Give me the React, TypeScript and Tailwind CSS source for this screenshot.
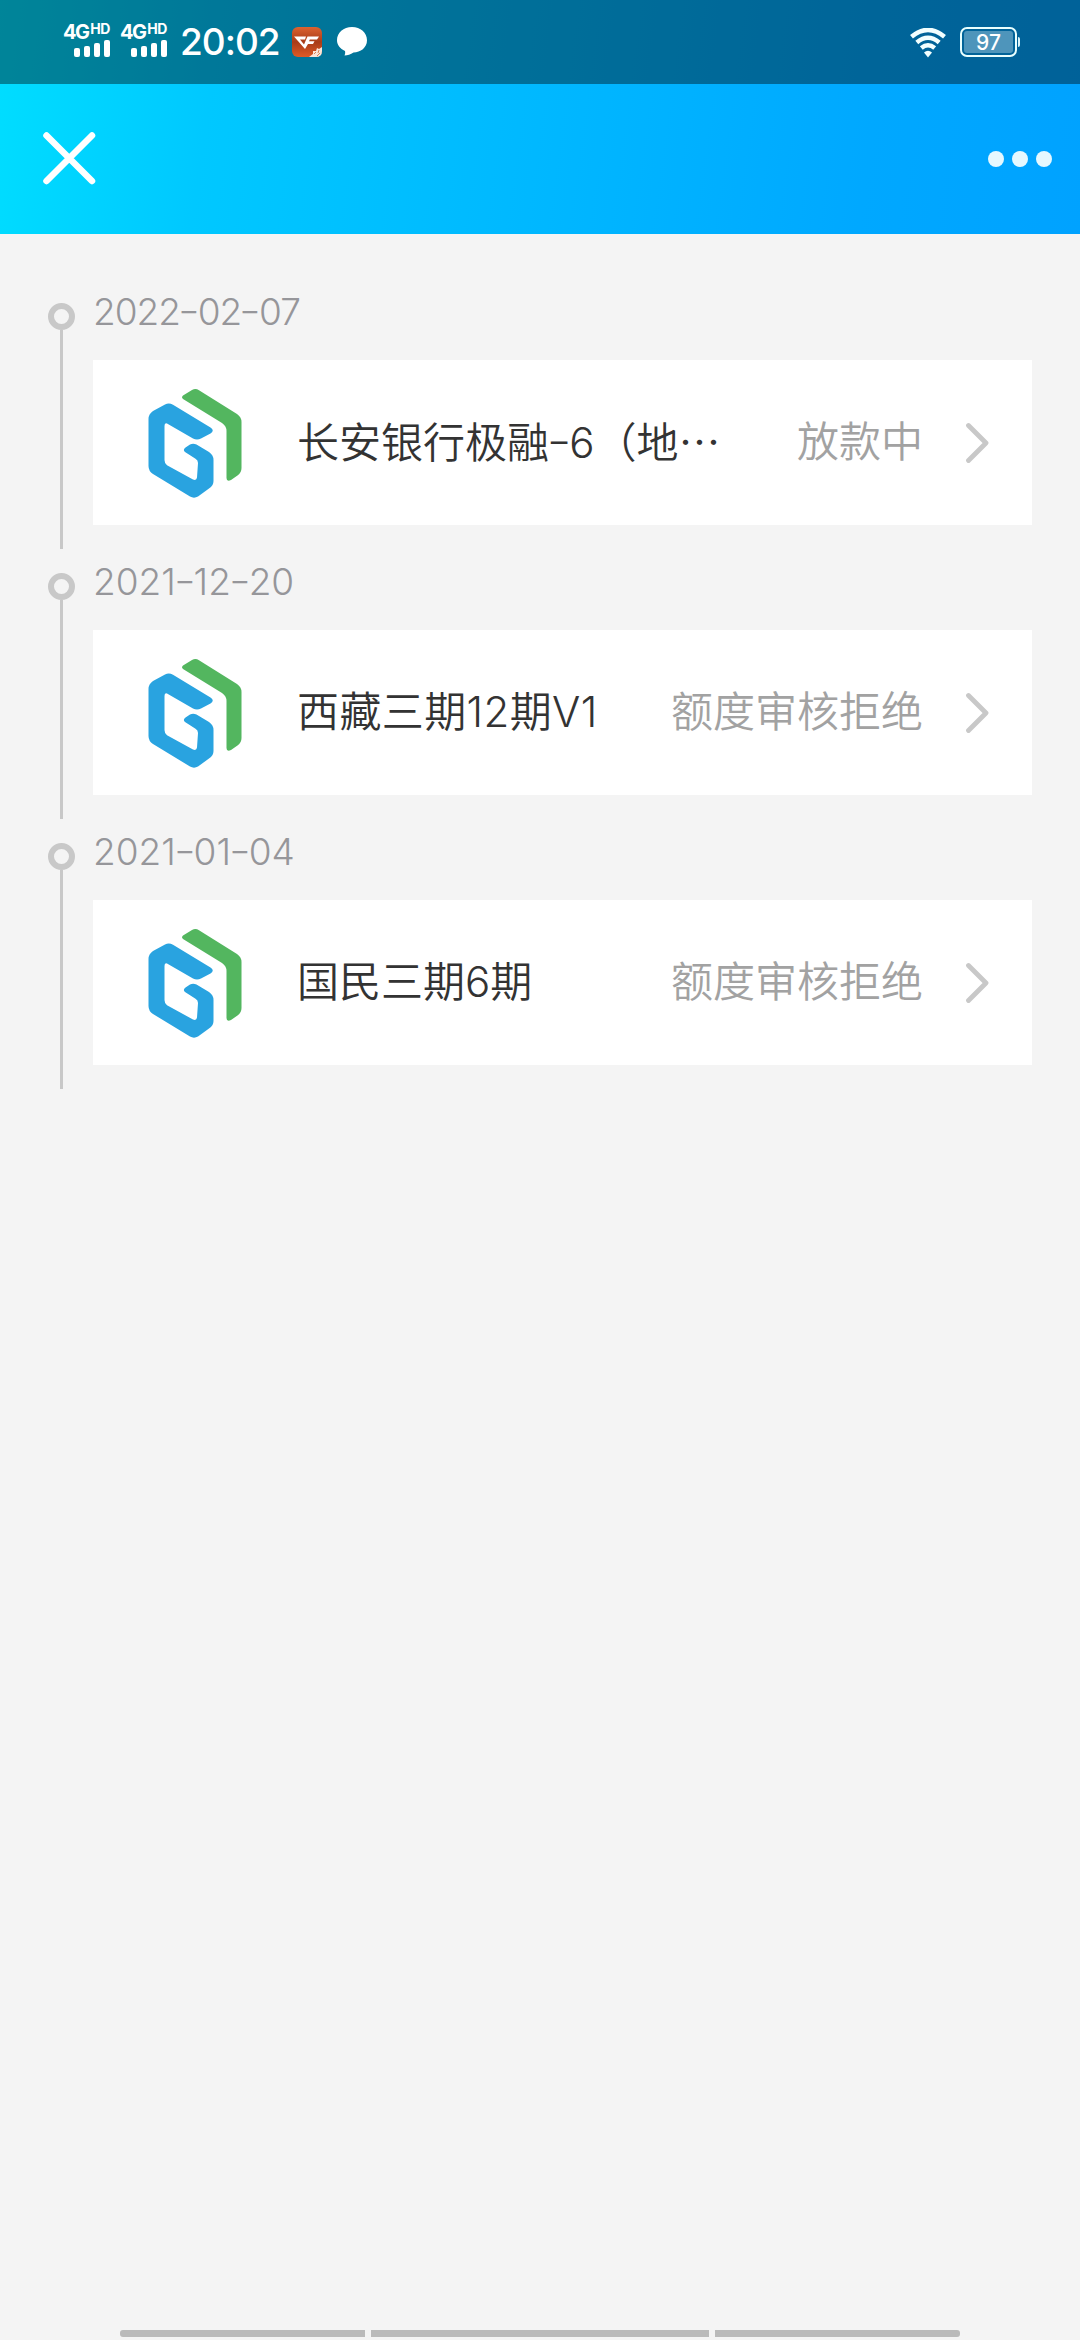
const records = [
  { date: '2022-02-07', spacing: 'tracking-[-1px]', titleSpacing: 'tracking-normal', title: '长安银行极融-6（地', more: true, status: '放款中' },
  { date: '2021-12-20', spacing: 'tracking-[0px]', titleSpacing: 'tracking-[0.4px]', title: '西藏三期12期V1', more: false, status: '额度审核拒绝' },
  { date: '2021-01-04', spacing: 'tracking-[0px]', titleSpacing: 'tracking-normal', title: '国民三期6期', more: false, status: '额度审核拒绝' },
];

function Signal() {
  return (
    <div className="flex h-[33px] w-[47px] flex-col items-end">
      <div className="flex h-[16px] w-full items-start font-bold text-white">
        <span className="text-[20px] leading-[16px] tracking-[-1.6px]">4G</span>
        <span className="ml-[2px] text-[14px] leading-[10px] tracking-[-0.5px]">HD</span>
      </div>
      <div className="flex h-[17px] items-end gap-[4px]">
        <i className="h-[9px] w-[6px] rounded-[2px] bg-white" />
        <i className="h-[11px] w-[6px] rounded-[2px] bg-white" />
        <i className="h-[14px] w-[6px] rounded-[2px] bg-white" />
        <i className="h-[17px] w-[6px] rounded-[2px] bg-white" />
      </div>
    </div>
  );
}

function GameIcon() {
  return (
    <svg className="ml-[14px] mt-[27px] h-[30px] w-[30px]" viewBox="0 0 30 30">
      <defs>
        <linearGradient id="game" x1="0" y1="0" x2="0" y2="1">
          <stop offset="0" stopColor="#dc6230" />
          <stop offset="0.5" stopColor="#a83c18" />
          <stop offset="1" stopColor="#dd5a26" />
        </linearGradient>
      </defs>
      <rect width="30" height="30" rx="6" fill="url(#game)" />
      <path d="M2 9.500H14L13 12.500H8L12 17.500L15.500 9.500H27L25 12.500H17.800L17 14.200H22.500L21 17H16L13 22Z" fill="#fff" />
      <path d="M30 20v4q0 6-6 6h-7l4-3 0-3 3 0 1-3 2 1z" fill="#fbe5d8" />
      <path d="M22 27l2-2M26 26l1-3M25 29l3-3" stroke="#d8814f" strokeWidth="1" />
    </svg>
  );
}

function StatusBar() {
  return (
    <div className="flex h-[84px] items-start bg-black/40 text-white">
      <div className="ml-[63px] mt-[24px] flex gap-[10px]">
        <Signal />
        <Signal />
      </div>
      <span className="ml-[13px] mt-[20px] w-[98px] text-[37px] leading-[44px] font-medium tracking-[-1px] whitespace-nowrap">20:02</span>
      <GameIcon />
      <svg className="ml-[15px] mt-[27px] h-[30px] w-[30px]" viewBox="0 0 30 30" fill="#fff">
        <path d="M15 0C23.500 0 30 5.800 30 13.300 30 20.700 23.500 25.500 16.500 25.500 13.500 27.500 10.500 28.500 7.500 28.500 8.300 26.700 8.300 25.500 8 24 3 21.500 0 18 0 13.300 0 5.800 6.500 0 15 0Z" />
      </svg>
      <svg className="ml-auto mt-[28px] h-[30px] w-[36px]" viewBox="0 0 36 30" fill="none" stroke="#f2ffff" strokeWidth="4.500">
        <path d="M1.500 8.800Q18-5 34.500 8.800" />
        <path d="M6.800 14.500Q18 5 29.200 14.500" />
        <path d="M11.300 20Q18 14.500 24.700 20" />
        <path d="M14 24.500Q18 21 22 24.500L18 29.500Z" fill="#f2ffff" stroke="none" />
      </svg>
      <div className="mr-[60px] ml-[14px] mt-[27px] flex items-center">
        <div className="flex h-[30px] w-[57px] rounded-[7px] border-[2px] border-[#e8ffff] p-[2px]">
          <div className="flex-1 rounded-[3px] bg-[#4e95bb] text-center text-[21px] leading-[23px] font-medium">97</div>
        </div>
        <div className="ml-[1px] h-[10px] w-[2px] rounded-r-[2px] bg-[#d8f4fa]" />
      </div>
    </div>
  );
}

function TitleBar() {
  return (
    <div className="flex h-[150px] items-center justify-between pr-[28px] pb-[1px] pl-[43px]">
      <svg className="h-[53px] w-[53px]" viewBox="0 0 53 53" stroke="#fff" strokeWidth="6.500" strokeLinecap="round">
        <path d="M3.500 3.500L49 49M49 3.500L3.500 49" />
      </svg>
      <div className="flex gap-[8px]">
        <i className="h-[16px] w-[16px] rounded-full bg-[#e6f8ff]" />
        <i className="h-[16px] w-[16px] rounded-full bg-[#e6f8ff]" />
        <i className="h-[16px] w-[16px] rounded-full bg-[#e6f8ff]" />
      </div>
    </div>
  );
}

function Logo() {
  return (
    <svg className="mt-[2px] ml-[55px] h-[109px] w-[94px] shrink-0" viewBox="0 0 94 109">
      <path
        d="M35 6.500L44 1Q47.500-1 51 1.200L89 25Q93.500 28 93.500 33V79Q93.500 84 89.500 86.500L83 91Q78.500 93 78.500 89V42Q78.500 37 74 34L35 10Q33 8.300 35 6.500Z"
        fill="#53b65f"
      />
      <path
        d="M5 22L17 15.500Q21 13.500 25 15.800L62.500 38.500Q67 41.500 62.500 44.500L53 49.500Q49 51.500 45 49.500L19 34.500Q16.500 33.500 16.500 37V71Q16.500 74.500 19 76.200L45 90.500Q48.500 92 49 88.500L50 74Q50 71 47.500 69.700L37 63Q34.500 61 37.500 58.500L42 55.500Q45 53.800 48.500 55.500L61 63Q65.500 66 65.500 71V92Q65.500 97 61 99.500L50 107.500Q46 109.800 42 107.500L5 85Q0.500 82 0.500 77V30Q0.500 25 5 22Z"
        fill="#29a3e0"
      />
    </svg>
  );
}

/* Text whose hyphens are widened and raised to the middle of the digits. */
function Dashed({ text }: { text: string }) {
  return (
    <>
      {text.split(/(-)/).map((part, i) =>
        part === '-' ? (
          <span key={i} className="inline-block w-[0.48em] origin-center -translate-y-[0.04em] scale-x-[1.3] text-center tracking-normal">
            -
          </span>
        ) : (
          <span key={i}>{part}</span>
        ),
      )}
    </>
  );
}

function Record({ date, spacing, titleSpacing, title, more, status }: (typeof records)[number]) {
  return (
    <div className="flex h-[270px]">
      <div className="mr-[18px] ml-[48px] flex w-[27px] flex-col items-center pt-[24px]">
        <div className="h-[27px] w-[27px] shrink-0 rounded-full border-[6px] border-[#c8c8c8]" />
        <div className="h-[219px] w-[3px] bg-[#c8c8c8]" />
      </div>
      <div className="w-[939px]">
        <div className={'h-[81px] pt-[11px] text-[37px] leading-[44px] font-light whitespace-nowrap text-[#96969a] ' + spacing}>
          <Dashed text={date} />
        </div>
        <div className="flex h-[165px] items-center bg-white text-[42px] leading-[60px] font-[350] whitespace-nowrap">
          <Logo />
          <div className={'mb-[2px] ml-[55px] text-[#333] ' + titleSpacing}>
            <Dashed text={title} />
            {more && <span className="font-['Noto_Sans_CJK_SC',sans-serif]">…</span>}
          </div>
          <div className="mr-[42px] mb-[2px] ml-auto text-[#a2a2a2]">{status}</div>
          <svg className="mr-[43px] h-[42px] w-[24px] shrink-0" viewBox="0 0 24 42" fill="none" stroke="#c8c8c8" strokeWidth="4.800" strokeLinecap="round" strokeLinejoin="round">
            <path d="M3.500 3.500L21 21L3.500 38.500" />
          </svg>
        </div>
      </div>
    </div>
  );
}

export default function App() {
  return (
    <div
      lang="zh-CN"
      className="flex h-[2340px] w-[1080px] flex-col bg-[#f4f4f4] font-['Inter','Noto_Sans_CJK_SC',sans-serif]"
    >
      <header className="bg-[linear-gradient(98deg,#00deff_0%,#00c8ff_20%,#00a8ff_80%,#00a2ff_100%)]">
        <StatusBar />
        <TitleBar />
      </header>
      <main className="flex-1 pt-[45px]">
        {records.map((r) => (
          <Record key={r.date} {...r} />
        ))}
      </main>
      <footer className="mb-[3px] flex h-[7px] justify-center gap-[6px]">
        <i className="w-[245px] rounded-l-[3px] bg-[#bababa]" />
        <i className="w-[338px] bg-[#bababa]" />
        <i className="w-[245px] rounded-r-[3px] bg-[#bababa]" />
      </footer>
    </div>
  );
}
